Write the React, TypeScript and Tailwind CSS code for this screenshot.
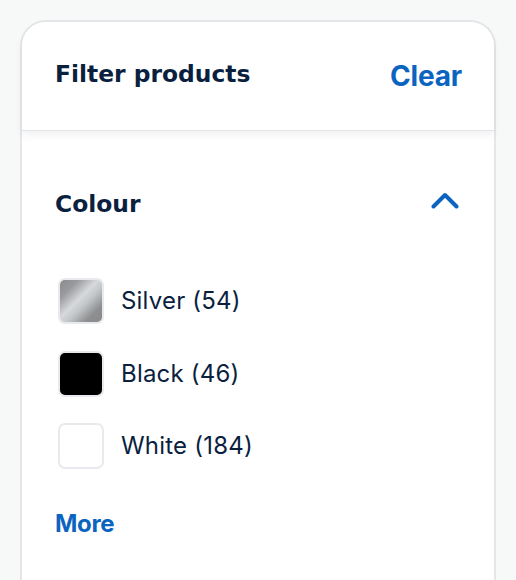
const COLOURS = [
  { label: "Silver", count: 54, swatch: "bg-[linear-gradient(135deg,#8a8a8a_0%,#999b9e_22%,#d6d8db_45%,#c4c7ca_58%,#8e8f91_80%,#8a8a8a_100%)]" },
  { label: "Black", count: 46, swatch: "bg-black" },
  { label: "White", count: 184, swatch: "bg-white" },
];

export default function App() {
  return (
    <div className="min-h-[580px] w-[516px] overflow-hidden bg-[#f7f8f8] pl-[20px] pr-[20px] pt-[20px] font-['Inter',sans-serif]">
      <div className="h-[600px] rounded-t-[26px] border-2 border-b-0 border-[#e4e6e9] bg-white">
        <div className="relative z-10 flex h-[109px] items-start justify-between rounded-t-[24px] border-b border-[#e1e4e8] bg-white pl-[33px] pr-[32px] pt-[38px] shadow-[0_4px_8px_rgba(0,0,0,0.06)]">
          <h2 className="font-['DejaVu_Sans',sans-serif] text-[23.4px] font-bold leading-[28px] text-[#0b1f3f]">Filter products</h2>
          <button className="-mt-[1px] text-[28px] font-bold leading-[34px] tracking-[-0.2px] text-[#0a64c0]">Clear</button>
        </div>

        <div className="pl-[33px] pr-[34px]">
          <div className="flex items-center justify-between pt-[59px]">
            <h3 className="font-['DejaVu_Sans',sans-serif] text-[23.4px] font-bold leading-[28px] text-[#0b1f3f]">Colour</h3>
            <svg width="28" height="17" viewBox="0 0 28 17" fill="none" className="mb-[8px] mr-[1px] text-[#0a64c0]">
              <polyline points="2.5,14.5 14,3 25.5,14.5" stroke="currentColor" strokeWidth="4" strokeLinecap="round" strokeLinejoin="round" />
            </svg>
          </div>

          <ul className="mt-[60px] flex flex-col gap-[26.5px]">
            {COLOURS.map(c => (
              <li key={c.label} className="flex items-center gap-[17px] pl-[3px]">
                <span className={`h-[46px] w-[46px] shrink-0 rounded-[7px] border-2 border-[#e8eaed] ${c.swatch}`} />
                <span className="text-[24px] leading-[30px] tracking-[0.2px] text-[#0b1f3f]">
                  {c.label} ({c.count})
                </span>
              </li>
            ))}
          </ul>

          <button className="mt-[40px] text-[24px] font-bold leading-[30px] tracking-[-0.3px] text-[#0a64c0]">More</button>
        </div>
      </div>
    </div>
  );
}
